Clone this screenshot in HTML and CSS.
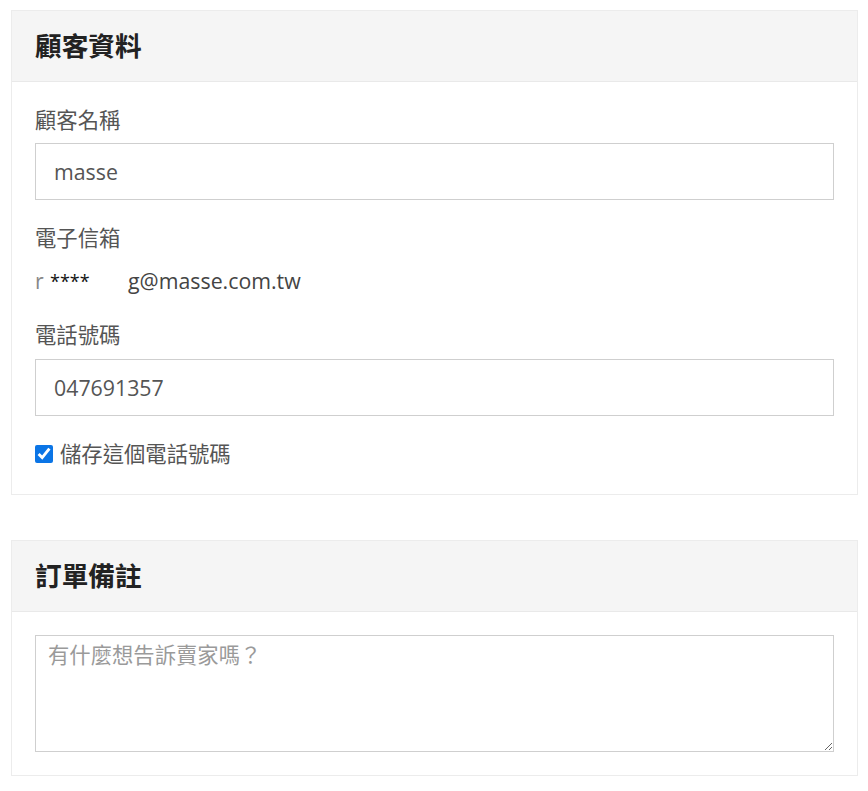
FILE: index.html
```html
<!DOCTYPE html>
<html lang="zh-Hant">
<head>
<meta charset="utf-8">
<title>顧客資料</title>
<link rel="stylesheet" href="styles.css">
</head>
<body>
<div class="page">
  <section class="card">
    <header class="card-header"><h2 class="card-title">顧客資料</h2></header>
    <div class="card-body card-body-form">
      <label class="field-label">顧客名稱</label>
      <input class="text-input" type="text" value="masse">
      <label class="field-label gap-top">電子信箱</label>
      <div class="email"><span class="mask-a">r</span><span class="mask-b">****</span><span>g@masse.com.tw</span></div>
      <label class="field-label gap-top2">電話號碼</label>
      <input class="text-input" type="text" value="047691357">
      <label class="check-row"><input class="check" type="checkbox" checked><span>儲存這個電話號碼</span></label>
    </div>
  </section>

  <section class="card card-second">
    <header class="card-header"><h2 class="card-title">訂單備註</h2></header>
    <div class="card-body">
      <textarea class="note" placeholder="有什麼想告訴賣家嗎？"></textarea>
    </div>
  </section>
</div>
</body>
</html>
```

FILE: styles.css
```css
* { box-sizing: border-box; }
html, body { margin: 0; padding: 0; background: #fff; }
body {
  font-family: "Open Sans", "Noto Sans CJK TC", sans-serif;
  font-size: 21.33px;
  line-height: 30px;
  color: #555;
}
.page {
  padding: 10px 10px 0 11px;
}
.card {
  border: 1px solid #ececec;
  background: #fff;
}
.card-second { margin-top: 45px; }
.card-header {
  height: 71px;
  background: #f5f5f5;
  border-bottom: 1px solid #e9e9e9;
  padding: 0 23px;
  display: flex;
  align-items: center;
}
.card-title {
  margin: 0;
  font-size: 26.67px;
  font-weight: 700;
  color: #222;
  line-height: 36px;
}
.card-body {
  padding: 23px;
  display: flex;
  flex-direction: column;
}
.card-body-form { padding-bottom: 25px; }
.field-label {
  display: block;
  line-height: 30px;
  color: #555;
  margin-bottom: 8px;
}
.gap-top { margin-top: 23px; margin-bottom: 13px; }
.gap-top2 { margin-top: 24px; margin-bottom: 9px; }
.text-input {
  display: block;
  width: 100%;
  height: 57px;
  border: 1px solid #cfcfcf;
  border-radius: 0;
  padding: 0 18px;
  font: inherit;
  color: #555;
  background: #fff;
  outline: none;
}
.email {
  line-height: 30px;
  color: #444;
  white-space: nowrap;
}
.mask-a { display: inline-block; width: 15px; color: #888; }
.mask-b { display: inline-block; width: 78px; color: #111; font-size: 18px; vertical-align: 1px; }
.check-row {
  display: flex;
  align-items: center;
  margin-top: 23px;
  line-height: 30px;
  color: #555;
}
.check {
  margin: 0 7px 0 0;
  width: 18px;
  height: 18px;
  accent-color: #0b75e6;
}
.note {
  display: block;
  width: 100%;
  height: 117px;
  border: 1px solid #cfcfcf;
  border-radius: 0;
  padding: 4px 12px;
  font: inherit;
  line-height: 30px;
  color: #555;
  resize: vertical;
  outline: none;
}
.note::placeholder { color: #9a9a9a; }
```
